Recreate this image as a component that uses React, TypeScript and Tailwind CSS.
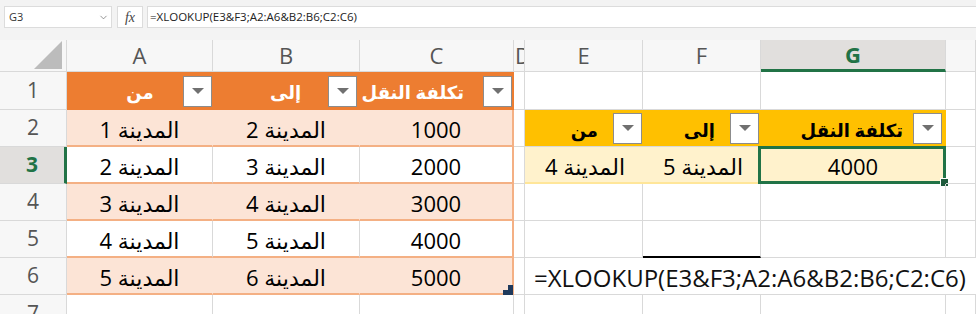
import React from 'react';
import { ChevronDown } from 'lucide-react';

const GR = 'border-r border-r-[#d9d9d9]';
const GB = 'border-b border-b-[#d9d9d9]';
const FORMULA = '=XLOOKUP(E3&F3;A2:A6&B2:B6;C2:C6)';

const routes = [
  ['المدينة 1', 'المدينة 2', '1000'],
  ['المدينة 2', 'المدينة 3', '2000'],
  ['المدينة 3', 'المدينة 4', '3000'],
  ['المدينة 4', 'المدينة 5', '4000'],
  ['المدينة 5', 'المدينة 6', '5000'],
];

type CellProps = { className?: string; children?: React.ReactNode };

function Cell({ className = '', children }: CellProps) {
  return <div className={`relative flex items-center min-w-0 ${className}`}>{children}</div>;
}

function FilterButton() {
  return (
    <div className="w-[29px] h-[31px] shrink-0 bg-white border border-[#8c8c8c] flex items-center justify-center">
      <svg width="12" height="6" viewBox="0 0 12 6">
        <path d="M0 0h12L6 6z" fill="#707070" />
      </svg>
    </div>
  );
}

function ColHead({ label, className = '' }: { label: string; className?: string }) {
  return (
    <Cell className={`${GR} ${GB} bg-[#f7f7f7] justify-center text-[22px] text-[#555] ${className}`}>
      {label}
    </Cell>
  );
}

function RowHead({ n, active = false }: { n: number; active?: boolean }) {
  if (active) {
    return (
      <Cell className={`${GB} border-r-[3px] border-r-[#217346] bg-[#e1dfdd] justify-center text-[21px] font-bold text-[#217346]`}>
        {n}
      </Cell>
    );
  }
  return (
    <Cell className={`${GR} ${GB} bg-[#f7f7f7] justify-center text-[21px] text-[#555]`}>{n}</Cell>
  );
}

function Blank({ className = '' }: { className?: string }) {
  return <Cell className={`${GR} ${GB} ${className}`} />;
}

function Ar({ children, className = '' }: { children: React.ReactNode; className?: string }) {
  return (
    <span dir="rtl" className={`whitespace-nowrap ${className}`}>
      {children}
    </span>
  );
}

function FormulaBar() {
  return (
    <div className="h-[40px] bg-[#f3f3f3] pt-[6px]">
      <div className="flex h-[22px]">
        <div className="ml-[4px] w-[108px] bg-white border border-[#dcdcdc] flex items-center justify-between pl-[4px] pr-[2px] text-[11px] text-[#333]">
          <span>G3</span>
          <ChevronDown size={11} strokeWidth={1.5} className="text-[#666]" />
        </div>
        <div className="ml-[5px] w-[26px] bg-white border border-[#dcdcdc] flex items-center justify-center [font-family:'Liberation_Serif',serif] italic text-[14px] text-[#444]">
          fx
        </div>
        <div className="ml-[4px] flex-1 bg-white border border-[#dcdcdc] border-r-0 flex items-center pl-[2px] text-[11.5px] text-[#222]">
          {FORMULA}
        </div>
      </div>
    </div>
  );
}

export default function App() {
  return (
    <div className="w-[976px] h-[314px] overflow-hidden bg-white text-black [font-family:'Open_Sans','DejaVu_Sans',sans-serif]">
      <FormulaBar />
      <div className="grid grid-cols-[67px_146px_147px_154px_11px_118px_118px_185px_30px] grid-rows-[32px_38px_37px_37px_37px_37px_37px_19px]">
        {/* column headers */}
        <Cell className={`${GR} ${GB} bg-[#f7f7f7] items-end justify-end pr-[4px] pb-[2px]`}>
          <svg width="28" height="28" viewBox="0 0 28 28">
            <path d="M28 0V28H0z" fill="#bcbcbc" />
          </svg>
        </Cell>
        <ColHead label="A" />
        <ColHead label="B" />
        <ColHead label="C" />
        <Cell className={`${GR} ${GB} bg-[#f7f7f7] overflow-hidden justify-start pl-[1px] text-[22px] text-[#555]`}>D</Cell>
        <ColHead label="E" />
        <ColHead label="F" />
        <Cell className="border-r border-r-[#d9d9d9] border-b-[3px] border-b-[#217346] bg-[#e1dfdd] justify-center text-[22px] font-bold text-[#217346]">
          G
        </Cell>
        <ColHead label="" />

        {/* row 1: header of the orange table */}
        <RowHead n={1} />
        <Cell className="bg-[#ed7d31] pl-[30px] pr-[1px]">
          <Ar className="flex-1 text-center text-white font-bold text-[18px] pt-[2px]">من</Ar>
          <FilterButton />
        </Cell>
        <Cell className="bg-[#ed7d31] pl-[30px] pr-[3px]">
          <Ar className="flex-1 text-center text-white font-bold text-[18px] pt-[2px]">إلى</Ar>
          <FilterButton />
        </Cell>
        <Cell className="bg-[#ed7d31] border-r-2 border-r-[#ed7d31] justify-end">
          <Ar className="mr-[19px] text-white font-bold text-[18px] pt-[2px]">تكلفة النقل</Ar>
          <FilterButton />
        </Cell>
        <Blank />
        <Blank />
        <Blank />
        <Blank />
        <Blank />

        {routes.map((r, i) => {
          const row = i + 2;
          const band = i % 2 === 0;
          const fill = band ? 'bg-[#fce4d6] border-r-transparent' : 'border-r-[#d9d9d9]';
          const base = `border-b-2 border-b-[#f4b084] justify-center text-[22px] pt-[3px]`;
          return (
            <React.Fragment key={row}>
              <RowHead n={row} active={row === 3} />
              <Cell className={`${base} border-r ${fill}`}>
                <Ar>{r[0]}</Ar>
              </Cell>
              <Cell className={`${base} border-r ${fill}`}>
                <Ar>{r[1]}</Ar>
              </Cell>
              <Cell className={`${base} border-r-2 border-r-[#f4b084] ${band ? 'bg-[#fce4d6]' : ''}`}>
                <span>{r[2]}</span>
                {row === 6 && (
                  <svg className="absolute right-[-1px] bottom-[-2px]" width="10" height="10" viewBox="0 0 10 10">
                    <path d="M5 0H10V10H0V5H5z" fill="#1f3a5c" />
                  </svg>
                )}
              </Cell>
              <Blank />
              {row === 2 && (
                <>
                  <Cell className={`${GB} bg-[#ffc000] justify-end pr-[1px]`}>
                    <Ar className="mr-[15px] font-bold text-[18px] pt-[4px]">من</Ar>
                    <FilterButton />
                  </Cell>
                  <Cell className={`${GB} bg-[#ffc000] justify-end pr-[2px]`}>
                    <Ar className="mr-[15px] font-bold text-[18px] pt-[4px]">إلى</Ar>
                    <FilterButton />
                  </Cell>
                  <Cell className={`${GB} border-r border-r-[#ffc000] bg-[#ffc000] justify-end pr-[3px]`}>
                    <Ar className="mr-[10px] font-bold text-[18px] pt-[4px]">تكلفة النقل</Ar>
                    <FilterButton />
                  </Cell>
                </>
              )}
              {row === 3 && (
                <>
                  <Cell className="bg-[#fff2cc] border-b-2 border-b-[#ffe699] justify-end pr-[18px] pt-[3px] text-[22px]">
                    <Ar>المدينة 4</Ar>
                  </Cell>
                  <Cell className="bg-[#fff2cc] border-b-2 border-b-[#ffe699] justify-end pr-[18px] pt-[3px] text-[22px]">
                    <Ar>المدينة 5</Ar>
                  </Cell>
                  <Cell className="bg-[#fff2cc] border-b-2 border-b-[#ffe699] border-r border-r-[#fff2cc] justify-center pt-[3px] text-[22px]">
                    <span>4000</span>
                    <div className="absolute left-[-3px] top-[-1px] right-[-1px] bottom-[-2px] border-[3px] border-[#217346] pointer-events-none">
                      <div className="absolute right-[-6px] bottom-[-6px] w-[9px] h-[9px] bg-[#1d5a3c] border border-white" />
                    </div>
                  </Cell>
                </>
              )}
              {(row === 4 || row === 5) && (
                <>
                  <Blank />
                  <Cell className={`${GR} ${row === 5 ? 'border-b-2 border-b-black' : GB}`} />
                  <Blank />
                </>
              )}
              {row === 6 && (
                <>
                  <Cell className={`${GB} pl-[9px] pt-[3px] z-10`}>
                    <span className="whitespace-nowrap text-[24px] text-[#111]">{FORMULA}</span>
                  </Cell>
                  <Cell className={GB} />
                  <Cell className={GB} />
                </>
              )}
              {row === 6 ? <Cell className={GB} /> : <Blank />}
            </React.Fragment>
          );
        })}

        {/* row 7, cut off by the window */}
        <Cell className={`${GR} bg-[#f7f7f7] overflow-hidden items-start justify-center`}>
          <div className="h-[37px] flex items-center text-[21px] text-[#555]">7</div>
        </Cell>
        <Cell className={GR} />
        <Cell className={GR} />
        <Cell className={GR} />
        <Cell className={GR} />
        <Cell className={GR} />
        <Cell className={GR} />
        <Cell className={GR} />
        <Cell className={GR} />
      </div>
    </div>
  );
}
